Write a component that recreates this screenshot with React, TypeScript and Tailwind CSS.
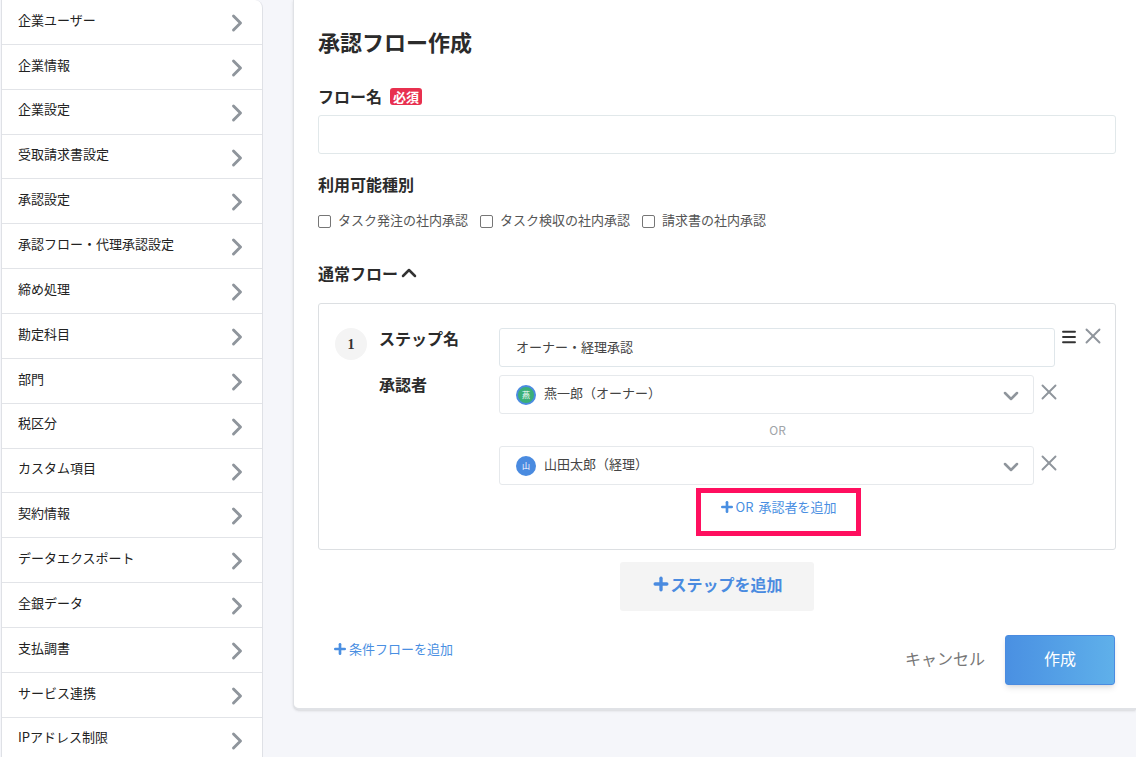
import { ChevronDown, ChevronRight, ChevronUp, Menu, Plus, X } from "lucide-react";

const font = "[font-family:'Noto_Sans_CJK_JP','Liberation_Sans',sans-serif]";

const menuItems = [
  "企業ユーザー",
  "企業情報",
  "企業設定",
  "受取請求書設定",
  "承認設定",
  "承認フロー・代理承認設定",
  "締め処理",
  "勘定科目",
  "部門",
  "税区分",
  "カスタム項目",
  "契約情報",
  "データエクスポート",
  "全銀データ",
  "支払調書",
  "サービス連携",
  "IPアドレス制限",
];

function Sidebar() {
  return (
    <aside className="ml-[1px] w-[262px] shrink-0 self-start rounded-tr-lg border-x border-[#dfe1e6] bg-white">
      {menuItems.map((item) => (
        <div key={item} className="flex h-[44.87px] items-center justify-between border-b border-[#e2e4e8] pl-4 pr-[11px]">
          <span className="mt-[-5px] text-[13px] text-[#222]">{item}</span>
          <ChevronRight size={28} strokeWidth={2.5} className="mt-[2px] text-[#8f959c]" />
        </div>
      ))}
    </aside>
  );
}

function Checkbox({ label }: { label: string }) {
  return (
    <label className="flex items-center">
      <span className="h-[13px] w-[13px] rounded-[2px] border border-[#767676] bg-white" />
      <span className="mb-[2px] ml-[7px] text-[13px] text-[#555]">{label}</span>
    </label>
  );
}

function ApproverSelect({ name, avatar, color }: { name: string; avatar: string; color: string }) {
  return (
    <div className="flex items-start">
      <div className="flex h-[39px] w-[535px] shrink-0 items-center rounded-[3px] border border-[#e6e9ec] pl-4 pr-[10px]">
        <span className={`flex h-5 w-5 items-center justify-center rounded-full border-2 border-[#4a8be0] text-[8px] text-white ${color}`}>
          {avatar}
        </span>
        <span className="mb-[3px] ml-2 text-[13px] text-[#444]">{name}</span>
        <ChevronDown size={24} strokeWidth={2.5} className="ml-auto mt-[3px] text-[#8f959c]" />
      </div>
      <X size={26} strokeWidth={1.75} className="ml-[2px] mt-1 shrink-0 text-[#8f959c]" />
    </div>
  );
}

export default function App() {
  return (
    <div className={`flex h-[757px] overflow-hidden bg-[#f5f6fa] ${font}`}>
      <Sidebar />
      <main className="ml-[30px] h-[710px] min-w-0 flex-1 rounded-bl-md border-b-2 border-l border-[#e0e2e6] bg-white pl-6 pr-5 pt-[26px] shadow-sm">
        <h1 className="text-[22px] leading-[30px] font-bold text-[#2b2b2b]">承認フロー作成</h1>

        <div className="mt-[30px] flex h-5 items-center">
          <span className="text-[16px] font-bold text-[#2b2b2b]">フロー名</span>
          <span className="ml-2 rounded-[3px] bg-[#e8304f] px-[3px] text-[13px] leading-[17px] font-bold text-white">必須</span>
        </div>
        <div className="mt-[9px] h-[39px] rounded-[3px] border border-[#e1e8ea]" />

        <div className="mt-5 h-5 text-[16px] leading-5 font-bold text-[#2b2b2b]">利用可能種別</div>
        <div className="mt-[17px] flex h-5 gap-3">
          <Checkbox label="タスク発注の社内承認" />
          <Checkbox label="タスク検収の社内承認" />
          <Checkbox label="請求書の社内承認" />
        </div>

        <div className="mt-8 flex h-5 items-center text-[16px] font-bold text-[#2b2b2b]">
          通常フロー
          <ChevronUp size={24} strokeWidth={2.5} className="ml-[-1px] text-[#333]" />
        </div>

        <section className="mt-5 h-[247px] rounded-[3px] border border-[#dcdfe2] pl-4 pr-3 pt-6">
          <div className="flex">
            <div className="flex h-8 w-8 shrink-0 items-center justify-center rounded-full bg-[#f4f4f4] font-['Liberation_Serif',serif] text-[14px] font-bold text-[#333]">
              1
            </div>
            <div className="ml-3 mt-[-1px] w-[120px] shrink-0 text-[16px] font-bold text-[#2b2b2b]">
              <div className="h-[46px] leading-[22px]">ステップ名</div>
              <div className="leading-[22px]">承認者</div>
            </div>
            <div className="min-w-0 flex-1">
              <div className="flex items-start">
                <div className="flex h-[39px] w-[556px] shrink-0 items-center rounded-[3px] border border-[#dfe6ea] pb-[2px] pl-4 text-[13px] text-[#444]">
                  オーナー・経理承認
                </div>
                <Menu size={18} strokeWidth={2.5} className="ml-[5px] shrink-0 text-[#333]" />
                <X size={26} strokeWidth={1.75} className="ml-[2px] mt-[-5px] shrink-0 text-[#8f959c]" />
              </div>
              <div className="mt-2">
                <ApproverSelect name="燕一郎（オーナー）" avatar="燕" color="bg-[#3aaf78]" />
              </div>
              <div className="flex h-8 w-[557px] items-center justify-center text-[12px] text-[#a0a4a8]">OR</div>
              <ApproverSelect name="山田太郎（経理）" avatar="山" color="bg-[#4a8be0]" />
              <div className="mt-[3px] ml-[197px] flex h-[48px] w-[165px] justify-center border-[5px] border-[#ff0f5f] pr-[2px] pt-1 text-[13px] text-[#4a8fe2]">
                <span className="flex h-5 items-center">
                  <Plus size={16} strokeWidth={4} className="mr-[1px]" />
                  <span className="mr-[5px]">OR</span>
                  承認者を追加
                </span>
              </div>
            </div>
          </div>
        </section>

        <div className="mt-3 ml-[302px] flex h-[49px] w-[194px] items-center justify-center rounded-[3px] bg-[#f4f4f4] pb-[5px] text-[16px] font-bold text-[#4a8be0]">
          <Plus size={20} strokeWidth={4} className="mr-[-1px]" />
          ステップを追加
        </div>

        <div className="mt-6 flex items-start justify-between pr-[1px]">
          <div className="ml-[14px] mt-[4px] flex items-center text-[13px] text-[#4a8fe2]">
            <Plus size={16} strokeWidth={4} className="mr-[1px]" />
            条件フローを追加
          </div>
          <div className="flex items-center">
            <span className="mb-[5px] text-[16px] text-[#777]">キャンセル</span>
            <button className="ml-5 h-[50px] w-[110px] rounded-[3px] border border-[#4a8be0] bg-gradient-to-r from-[#4a90e2] to-[#5fb0ea] pb-[5px] text-[16px] text-white shadow-md">
              作成
            </button>
          </div>
        </div>
      </main>
    </div>
  );
}
